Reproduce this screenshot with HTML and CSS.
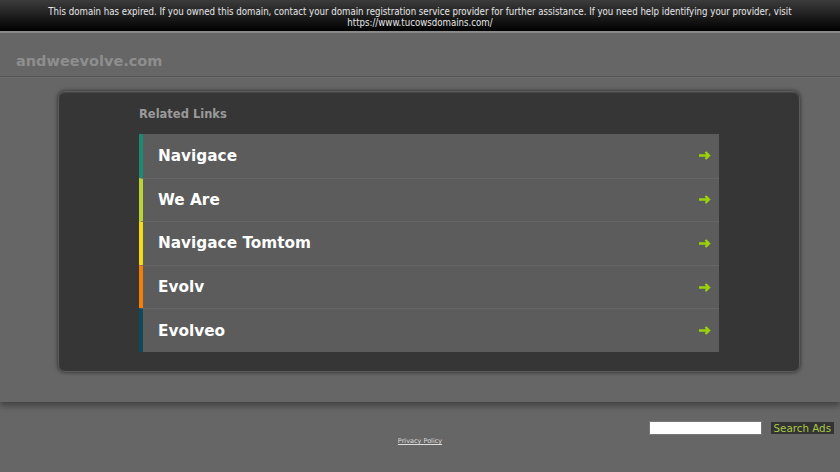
FILE: index.html
```html
<!DOCTYPE html>
<html>
    <head>
        <meta charset="utf-8">
        <link rel="stylesheet" href="styles.css">
        <title>andweevolve.com</title>
    </head>
    <body>
        <div class="notice">
            This domain has expired. If you owned this domain, contact your domain registration service provider for further assistance. If you need help identifying your provider, visit https://www.tucowsdomains.com/
        </div>
        <div class="main">
            <div class="header">
                <h1>andweevolve.com</h1>
            </div>
            <div class="box">
                <div class="links">
                    <h2>Related Links</h2>
                    <a class="row c1" href="#"><span>Navigace</span><svg class="arrow" viewBox="0 0 13 9"><path d="M0 4.5h10M6.5 1l3.5 3.5-3.5 3.5"/></svg></a>
                    <a class="row c2" href="#"><span>We Are</span><svg class="arrow" viewBox="0 0 13 9"><path d="M0 4.5h10M6.5 1l3.5 3.5-3.5 3.5"/></svg></a>
                    <a class="row c3" href="#"><span>Navigace Tomtom</span><svg class="arrow" viewBox="0 0 13 9"><path d="M0 4.5h10M6.5 1l3.5 3.5-3.5 3.5"/></svg></a>
                    <a class="row c4" href="#"><span>Evolv</span><svg class="arrow" viewBox="0 0 13 9"><path d="M0 4.5h10M6.5 1l3.5 3.5-3.5 3.5"/></svg></a>
                    <a class="row c5" href="#"><span>Evolveo</span><svg class="arrow" viewBox="0 0 13 9"><path d="M0 4.5h10M6.5 1l3.5 3.5-3.5 3.5"/></svg></a>
                </div>
            </div>
        </div>
        <div class="footer">
            <form class="search">
                <input type="text">
                <button type="button">Search Ads</button>
            </form>
            <a class="privacy" href="#">Privacy Policy</a>
        </div>
    </body>
</html>
```
FILE: styles.css
```css
body {
    margin: 0;
    background-color: #666666;
    font-family: "DejaVu Sans", Verdana, sans-serif;
}
.notice {
    height: 33px;
    box-sizing: border-box;
    padding: 6px 30px 0;
    background: linear-gradient(#3c3c3c, #000000);
    border-bottom: 2px solid #8c8c8c;
    color: #e6e6e6;
    font-family: "DejaVu Sans Condensed", "DejaVu Sans", sans-serif;
    font-stretch: condensed;
    font-size: 9.6px;
    line-height: 11px;
    text-align: center;
}
.main {
    background-color: #666666;
    box-shadow: 0 4px 6px rgba(0, 0, 0, 0.35);
    padding-bottom: 30px;
}
.header {
    height: 43px;
    border-bottom: 1px solid #555555;
    box-shadow: 0 1px 0 #6e6e6e;
}
h1 {
    margin: 0;
    padding: 20px 0 0 16px;
    font-size: 14.5px;
    font-weight: bold;
    color: #8e8e8e;
}
.box {
    margin: 14px 40px 0 58px;
    height: 281px;
    box-sizing: border-box;
    background-color: #363636;
    border: 1px solid #5a5a5a;
    border-radius: 7px;
    box-shadow: 0 0 4px rgba(0, 0, 0, 0.6), inset 0 1px 1px #4a4a4a;
    padding: 15px 0 0 80px;
}
.links {
    width: 580px;
}
h2 {
    margin: 0 0 13px;
    font-size: 11.5px;
    font-weight: bold;
    color: #9a9a9a;
}
.row {
    display: flex;
    align-items: center;
    justify-content: space-between;
    height: 43.6px;
    box-sizing: border-box;
    padding: 0 7px 0 15px;
    background-color: #5c5c5c;
    border-left: 4px solid #1c8a70;
    border-top: 1px solid #666666;
    color: #ffffff;
    font-size: 15.3px;
    font-weight: bold;
    text-decoration: none;
}
.row:first-of-type {
    border-top: none;
}
.c2 { border-left-color: #b8d436; }
.c3 { border-left-color: #f5db14; }
.c4 { border-left-color: #f57f05; }
.c5 { border-left-color: #0f4a5c; }
.arrow {
    width: 13px;
    height: 9px;
    fill: none;
    stroke: #9bd10a;
    stroke-width: 2.4;
}
.footer {
    padding: 19px 6px 0 0;
}
.search {
    display: flex;
    justify-content: flex-end;
    align-items: center;
    gap: 9px;
    margin: 0;
}
.search input {
    width: 113px;
    height: 14px;
    box-sizing: border-box;
    border: 1px solid #777777;
    background: #ffffff;
    margin: 0;
    padding: 0;
}
.search button {
    height: 12px;
    padding: 0 3px;
    border: none;
    background-color: #333333;
    color: #a8c84a;
    font-family: "DejaVu Sans", Verdana, sans-serif;
    font-size: 10.3px;
    line-height: 12px;
}
.privacy {
    display: block;
    width: fit-content;
    margin: 2px auto 0;
    padding-left: 6px;
    font-size: 6.5px;
    color: #dddddd;
}
```
